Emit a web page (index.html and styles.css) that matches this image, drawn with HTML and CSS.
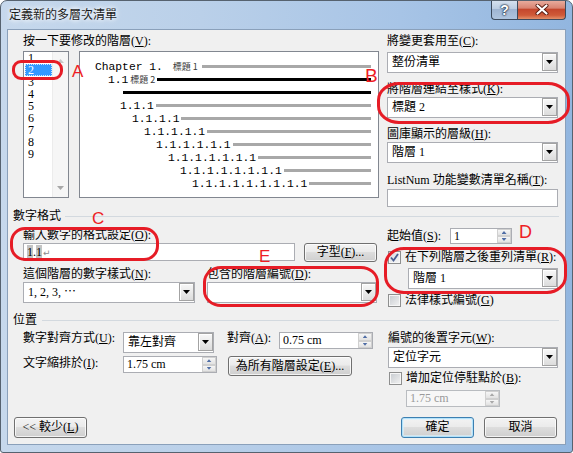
FILE: index.html
```html
<!DOCTYPE html>
<html lang="zh-Hant">
<head>
<meta charset="utf-8">
<title>定義新的多層次清單</title>
<link rel="stylesheet" href="styles.css">
</head>
<body>
<div class="window">
  <div class="titlebar">
    <div class="title">定義新的多層次清單</div>
    <div class="caption">
      <div class="cap help">?</div>
      <div class="cap close">
        <svg width="14" height="11" viewBox="0 0 14 11"><path d="M2.5 1.5 L11.5 9.5 M11.5 1.5 L2.5 9.5" stroke="#5a1e12" stroke-width="4" stroke-linecap="round" fill="none"/><path d="M2.5 1.5 L11.5 9.5 M11.5 1.5 L2.5 9.5" stroke="#fff" stroke-width="2.2" stroke-linecap="round" fill="none"/></svg>
      </div>
    </div>
  </div>

  <div class="client">
    <!-- top band -->
    <div class="band band-top">
      <div class="top-left">
        <div class="lbl">按一下要修改的階層(<u>V</u>):</div>
        <div class="boxes">
          <div class="listbox">
            <div class="items">
              <div class="item">1</div>
              <div class="item sel">2</div>
              <div class="item">3</div>
              <div class="item">4</div>
              <div class="item">5</div>
              <div class="item">6</div>
              <div class="item">7</div>
              <div class="item">8</div>
              <div class="item">9</div>
            </div>
            <div class="vscroll"><span class="arr up"></span><span class="arr down"></span></div>
          </div>
          <div class="preview">
            <div class="prow i1"><span class="num">Chapter 1.</span><span class="tag">標題 1</span><span class="bar gray"></span></div>
            <div class="prow i2"><span class="num">1.1</span><span class="tag">標題 2</span><span class="bar black"></span></div>
            <div class="prow i3"><span class="bar black"></span></div>
            <div class="prow i4"><span class="num">1.1.1</span><span class="bar gray"></span></div>
            <div class="prow i5"><span class="num">1.1.1.1</span><span class="bar gray"></span></div>
            <div class="prow i6"><span class="num">1.1.1.1.1</span><span class="bar gray"></span></div>
            <div class="prow i7"><span class="num">1.1.1.1.1.1</span><span class="bar gray"></span></div>
            <div class="prow i8"><span class="num">1.1.1.1.1.1.1</span><span class="bar gray"></span></div>
            <div class="prow i9"><span class="num">1.1.1.1.1.1.1.1</span><span class="bar gray"></span></div>
            <div class="prow i10"><span class="num">1.1.1.1.1.1.1.1.1</span><span class="bar gray"></span></div>
          </div>
        </div>
      </div>
      <div class="top-right">
        <div class="lbl">將變更套用至(<u>C</u>):</div>
        <div class="combo mt4"><span class="val">整份清單</span><span class="dd"></span></div>
        <div class="lbl mt10">將階層連結至樣式(<u>K</u>):</div>
        <div class="combo mt1"><span class="val">標題 2</span><span class="dd"></span></div>
        <div class="lbl mt10">圖庫顯示的層級(<u>H</u>):</div>
        <div class="combo mt1"><span class="val">階層 1</span><span class="dd"></span></div>
        <div class="lbl mt11">ListNum 功能變數清單名稱(<u>T</u>):</div>
        <div class="textbox mt2"></div>
      </div>
    </div>

    <div class="group-head gh1"><span>數字格式</span><span class="rule"></span></div>

    <!-- number format band -->
    <div class="band band-mid">
      <div class="mid-left">
        <div class="lbl mt6">輸入數字的格式設定(<u>O</u>):</div>
        <div class="row mt1">
          <div class="textbox tb-fmt"><span class="fld">1</span>.<span class="fld">1</span><span class="ret">↵</span></div>
          <div class="btn btn-font">字型(<u>F</u>)...</div>
        </div>
        <div class="row mt6">
          <div class="lbl w-n">這個階層的數字樣式(<u>N</u>):</div>
          <div class="lbl">包含的階層編號(<u>D</u>):</div>
        </div>
        <div class="row mt1">
          <div class="combo w-cn"><span class="val">1, 2, 3, ⋯</span><span class="dd"></span></div>
          <div class="combo w-cd"><span class="val"></span><span class="dd"></span></div>
        </div>
      </div>
      <div class="mid-right">
        <div class="row mt5 center">
          <div class="lbl w-s">起始值(<u>S</u>):</div>
          <div class="spin w-ss"><span class="val">1</span><span class="sb"><i class="up"></i><i class="dn"></i></span></div>
        </div>
        <div class="chkrow mt7">
          <span class="chk checked"><svg width="11" height="11" viewBox="0 0 11 11"><path d="M2 5.5 L4.5 8.5 L9 2" stroke="#4a5e92" stroke-width="1.8" fill="none"/></svg></span>
          <span class="lbl">在下列階層之後重列清單(<u>R</u>):</span>
        </div>
        <div class="combo mt4 w-cr"><span class="val">階層 1</span><span class="dd"></span></div>
        <div class="chkrow mt5">
          <span class="chk"></span>
          <span class="lbl">法律樣式編號(<u>G</u>)</span>
        </div>
      </div>
    </div>

    <div class="group-head gh2"><span>位置</span><span class="rule"></span></div>

    <!-- position band -->
    <div class="band band-pos">
      <div class="pos-left">
        <div class="row mt5">
          <div class="lbl w-u">數字對齊方式(<u>U</u>):</div>
          <div class="combo w-cu"><span class="val">靠左對齊</span><span class="dd"></span></div>
          <div class="lbl w-a">對齊(<u>A</u>):</div>
          <div class="spin w-sp"><span class="val">0.75 cm</span><span class="sb"><i class="up"></i><i class="dn"></i></span></div>
        </div>
        <div class="row mt3">
          <div class="lbl w-u mt1">文字縮排於(<u>I</u>):</div>
          <div class="spin w-sp"><span class="val">1.75 cm</span><span class="sb"><i class="up"></i><i class="dn"></i></span></div>
          <div class="btn btn-all">為所有階層設定(<u>E</u>)...</div>
        </div>
      </div>
      <div class="pos-right">
        <div class="lbl mt5">編號的後置字元(<u>W</u>):</div>
        <div class="combo mt2"><span class="val">定位字元</span><span class="dd"></span></div>
        <div class="chkrow mt4">
          <span class="chk"></span>
          <span class="lbl">增加定位停駐點於(<u>B</u>):</span>
        </div>
        <div class="spin disabled w-sp sp-dis mt5"><span class="val">1.75 cm</span><span class="sb"><i class="up"></i><i class="dn"></i></span></div>
      </div>
    </div>

    <div class="footer">
      <div class="btn">&lt;&lt; 較少(<u>L</u>)</div>
      <div class="btn default ok">確定</div>
      <div class="btn cancel">取消</div>
    </div>
  </div>
</div>

<div class="annot">
  <div class="oval ov-a"></div>
  <div class="oval ov-b"></div>
  <div class="oval ov-c"></div>
  <div class="oval ov-d"></div>
  <div class="oval ov-e"></div>
  <div class="letter lt-a">A</div>
  <div class="letter lt-b">B</div>
  <div class="letter lt-c">C</div>
  <div class="letter lt-d">D</div>
  <div class="letter lt-e">E</div>
</div>
</body>
</html>
```
FILE: styles.css
```css
* { box-sizing: border-box; }
html, body {
  margin: 0; padding: 0;
  width: 573px; height: 453px;
  overflow: hidden;
  background: #fff;
}
body {
  position: relative;
  font-family: "Liberation Serif", "Noto Sans CJK TC", serif;
  font-size: 12px;
  color: #000;
}
u { text-decoration: underline; text-underline-offset: 1px; }

/* window frame */
.window {
  width: 573px; height: 453px;
  border: 1px solid #56626f;
  border-radius: 7px 7px 3px 3px;
  background: linear-gradient(90deg, #c6d8ec 0%, #bad0e9 35%, #a7c4e6 70%, #92b6df 100%);
  display: flex; flex-direction: column;
  overflow: hidden;
}
.titlebar { height: 28px; flex: none; display: flex; align-items: flex-start; }
.title {
  margin: 6px 0 0 8px;
  line-height: 14px;
  font-family: "Noto Sans CJK TC", sans-serif;
  color: #1b1b1b;
  text-shadow: 0 0 4px #fff, 0 0 6px #fff;
}
.caption { margin: -1px 6px 0 auto; display: flex; }
.cap {
  height: 20px;
  border: 1px solid #3c4a5c; border-top: none;
  display: flex; align-items: center; justify-content: center;
}
.help {
  width: 26px; border-right: none;
  border-radius: 0 0 0 4px;
  background: linear-gradient(#d8e3f0, #bccde2 45%, #9fb5d2 50%, #afc5df 100%);
  color: #fff;
  font: bold 14px "Liberation Sans", sans-serif;
  text-shadow: 0 0 1px #1e2f45, 0 0 2px #1e2f45, 0 0 2px #1e2f45;
}
.close {
  width: 49px;
  border-radius: 0 0 4px 0;
  background: linear-gradient(#eab0a2, #d98472 42%, #c4472d 50%, #cf5a38 80%, #e3906a 100%);
}

/* client */
.client {
  margin: 0 6px;
  height: 416px;
  flex: none;
  border: 1px solid #8aa0ba;
  background: #f0f0f0;
  display: flex; flex-direction: column;
}
.lbl { height: 13px; line-height: 13px; white-space: nowrap; flex: none; }
.mt1 { margin-top: 1px; } .mt2 { margin-top: 2px; } .mt3 { margin-top: 3px; }
.mt4 { margin-top: 4px; } .mt5 { margin-top: 5px; } .mt6 { margin-top: 6px; }
.mt7 { margin-top: 7px; } .mt10 { margin-top: 10px; } .mt11 { margin-top: 11px; }

.band { display: flex; padding-left: 15px; flex: none; }
.row { display: flex; align-items: flex-start; }
.row.center { align-items: center; }

/* top band */
.band-top { padding-top: 5px; }
.top-left { width: 356px; }
.boxes { display: flex; gap: 10px; margin-top: 3px; height: 147px; }
.listbox { width: 46px; border: 1px solid #828790; background: #fff; display: flex; }
.items { width: 28px; padding-left: 1px; }
.item { width: 27px; height: 12px; line-height: 12px; padding-left: 3px; }
.item.sel { background: #3399ff; color: #fff; outline: 1px dotted #cfe6ff; outline-offset: -1px; }
.vscroll {
  flex: 1; background: #f6f6f6;
  border-left: 1px solid #ececec;
  display: flex; flex-direction: column; justify-content: space-between; align-items: center;
  padding: 7px 0 7px;
}
.arr { width: 7px; height: 4px; display: block; }
.arr.up { background: #c8c8c8; clip-path: polygon(50% 0, 100% 100%, 0 100%); }
.arr.down { background: #a8a8a8; clip-path: polygon(0 0, 100% 0, 50% 100%); }

.preview {
  width: 300px; border: 1px solid #828790; background: #fff;
  padding: 8px 7px 0 0;
  display: flex; flex-direction: column;
}
.prow {
  display: flex; align-items: center; height: 13px; flex: none;
  font: 11.3px "Liberation Mono", monospace;
  white-space: nowrap;
}
.bar { flex: 1; height: 3px; margin-left: 2px; }
.bar.gray { background: #a8a8a8; }
.bar.black { background: #000; }
.tag { font: 9px "Noto Sans CJK TC", sans-serif; color: #3a3a3a; line-height: 13px; }
.i1 { padding-left: 15px; } .i1 .tag { margin: 0 2px 0 10px; }
.i2 { padding-left: 28px; } .i2 .tag { margin-left: 2px; }
.i3 { padding-left: 41px; }
.i4 { padding-left: 40px; } .i5 { padding-left: 52px; } .i6 { padding-left: 64px; }
.i7 { padding-left: 76px; } .i8 { padding-left: 88px; } .i9 { padding-left: 100px; }
.i10 { padding-left: 112px; }

.top-right { width: 171px; margin-left: 8px; display: flex; flex-direction: column; }

/* controls */
.combo {
  display: flex; height: 21px; flex: none;
  border: 1px solid #abadb3; background: #fff;
}
.combo .val { flex: 1; padding-left: 4px; line-height: 19px; white-space: nowrap; overflow: hidden; }
.dd {
  width: 15px; margin: 0 0 1px;
  border: 1px solid #a3a3a3;
  background: linear-gradient(#f8f8f8, #dcdcdc);
  box-shadow: inset 1px 1px #fff;
  display: flex; align-items: center; justify-content: center;
}
.dd::after {
  content: ""; width: 7px; height: 4px; background: #000;
  clip-path: polygon(0 0, 100% 0, 50% 100%);
}
.textbox { height: 18px; border: 1px solid #abadb3; background: #fff; flex: none; }
.spin { display: flex; height: 17px; border: 1px solid #abadb3; background: #fff; flex: none; }
.spin .val { flex: 1; padding-left: 3px; line-height: 15px; white-space: nowrap; }
.sb { width: 15px; display: flex; flex-direction: column; padding: 0 0 0 1px; }
.sb i {
  flex: 1; display: flex; align-items: center; justify-content: center;
  background: linear-gradient(#f6f6f6, #e2e2e2);
  border: 1px solid #d0d0d0;
}
.sb i::after { content: ""; width: 5px; height: 3px; background: #4f6da5; }
.sb i.up::after { clip-path: polygon(50% 0, 100% 100%, 0 100%); }
.sb i.dn::after { clip-path: polygon(0 0, 100% 0, 50% 100%); }
.spin.disabled { background: #f7f7f7; border-color: #b9bcc0; color: #9a9a9a; }
.spin.disabled .sb i::after { background: #a8a8a8; }

.btn {
  height: 21px; flex: none;
  border: 1px solid #707070; border-radius: 3px;
  background: linear-gradient(#f3f3f3 0%, #ebebeb 45%, #dddddd 50%, #cfcfcf 100%);
  box-shadow: inset 0 0 0 1px rgba(255,255,255,.75);
  display: flex; align-items: center; justify-content: center;
  white-space: nowrap; line-height: 13px;
  width: 73px;
}
.btn.default {
  border-color: #3c7fb1;
  box-shadow: inset 0 0 0 1px #b3e2fa, inset 0 0 0 2px rgba(220,242,253,.6);
}

.chkrow { display: flex; align-items: center; height: 13px; flex: none; }
.chk {
  width: 13px; height: 13px; margin-left: 1px; margin-right: 4px; flex: none;
  border: 1px solid #8e8f8f;
  background: linear-gradient(135deg, #c6cacf, #f3f3f3);
  box-shadow: inset 0 0 0 1px #f6f6f6;
  display: flex; align-items: center; justify-content: center;
}
.chk.checked { background: linear-gradient(135deg, #d7dbe0, #f6f6f6); }

/* group heads */
.group-head {
  display: flex; align-items: center; flex: none;
  height: 13px; line-height: 13px;
  padding: 0 6px 0 5px;
}
.group-head .rule { flex: 1; height: 1px; background: #d3d9df; margin-left: 4px; }
.gh1 { margin-top: 3px; }
.gh2 { margin-top: 7px; }
.gh2 .rule { margin-left: 5px; }

/* number format band */
.mid-left { width: 354px; display: flex; flex-direction: column; }
.tb-fmt { width: 272px; padding-left: 3px; line-height: 16px; }
.fld { background: #c4c4c4; }
.ret { color: #8a8a8a; font-family: "DejaVu Sans", sans-serif; font-size: 9px; margin-left: 1px; }
.btn-font { margin-left: 9px; height: 19px; }
.w-n { width: 184px; }
.w-cn { width: 172px; }
.w-cd { width: 170px; margin-left: 12px; }
.mid-right { width: 171px; margin-left: 10px; display: flex; flex-direction: column; }
.w-s { width: 63px; }
.w-ss { width: 62px; height: 16px; }
.w-cr { width: 150px; margin-left: 21px; }

/* position band */
.pos-left { width: 354px; display: flex; flex-direction: column; }
.w-u { width: 100px; }
.w-cu { width: 91px; }
.w-a { width: 52px; margin-left: 13px; }
.w-sp { width: 94px; }
.btn-all { width: 124px; height: 20px; margin-left: 11px; }
.pos-right { width: 170px; margin-left: 11px; display: flex; flex-direction: column; }
.sp-dis { margin-left: 18px; }

/* footer */
.footer { margin-top: auto; display: flex; padding: 0 8px 6px 6px; flex: none; }
.ok { margin-left: auto; }
.cancel { margin-left: 10px; }

/* red annotations drawn over the screenshot */
.annot { position: absolute; left: 0; top: 0; width: 573px; height: 453px; pointer-events: none; }
.oval { position: absolute; border: 3px solid #e61c26; }
.ov-a { left: 12px; top: 60px; width: 51px; height: 20px; border-radius: 9px; }
.ov-b { left: 377px; top: 82px; width: 193px; height: 42px; border-radius: 22px / 18px; }
.ov-c { left: 10px; top: 227px; width: 149px; height: 34px; border-radius: 15px; }
.ov-d { left: 384px; top: 247px; width: 183px; height: 47px; border-radius: 20px / 18px; }
.ov-e { left: 203px; top: 266px; width: 176px; height: 41px; border-radius: 18px / 16px; }
.letter {
  position: absolute; line-height: 1;
  font-family: "Liberation Sans", sans-serif;
  color: #ee1d24;
}
.lt-a { left: 72px; top: 63px; font-size: 17px; }
.lt-b { left: 365px; top: 66px; font-size: 19px; }
.lt-c { left: 92px; top: 210px; font-size: 17px; }
.lt-d { left: 519px; top: 223px; font-size: 18px; }
.lt-e { left: 259px; top: 248px; font-size: 17px; }
```
